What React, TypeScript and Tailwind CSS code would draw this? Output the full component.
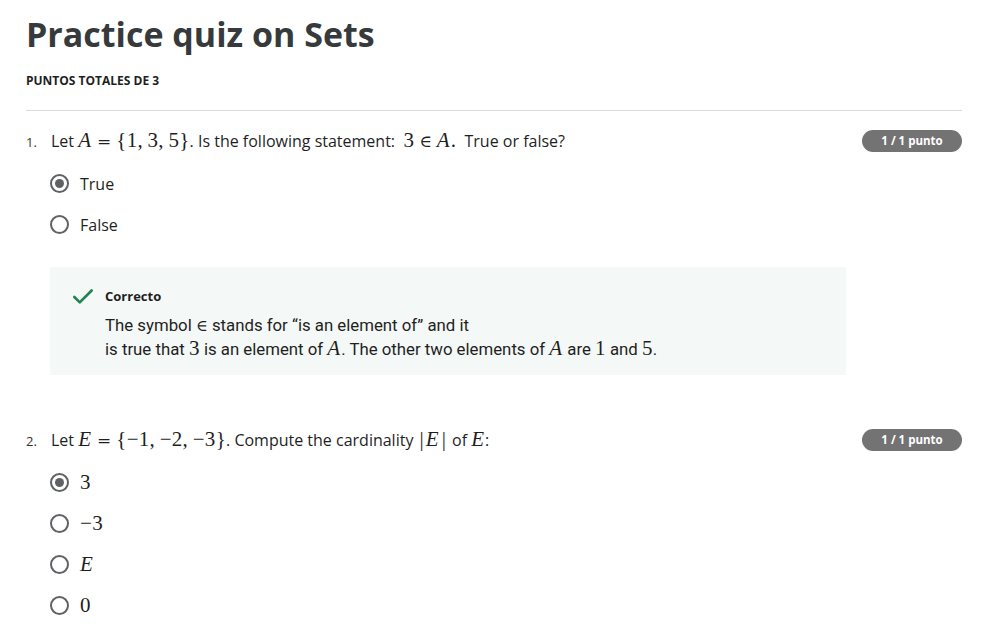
import { Check } from 'lucide-react';

const sans = { fontFamily: '"Open Sans", "Liberation Sans", sans-serif' };

function M({ children }: { children: React.ReactNode }) {
  return <span className="font-['Liberation_Serif',serif] text-[21px] leading-none tracking-[0.3px]">{children}</span>;
}

function V({ children }: { children: React.ReactNode }) {
  return <span className="font-['Liberation_Serif',serif] text-[21px] leading-none italic pr-[1px]">{children}</span>;
}

// relation symbol with KaTeX-like thick spacing
function R({ children }: { children: React.ReactNode }) {
  return <span className="font-['DejaVu_Serif',serif] text-[17px] leading-none mx-[5px]">{children}</span>;
}

// |x| delimiter bar
function Bar() {
  return <span className="font-['Liberation_Serif',serif] text-[21px] leading-none px-[2px]">|</span>;
}

function Radio({ checked, children }: { checked?: boolean; children: React.ReactNode }) {
  return (
    <div className="flex items-center h-[41px]">
      <span className="flex items-center justify-center size-[19px] rounded-full border-2 border-[#5f6164] bg-white shrink-0">
        {checked && <span className="size-[9px] rounded-full bg-[#5f6164]" />}
      </span>
      <span className="ml-[11px] text-[16px] text-[#1f1f1f]">{children}</span>
    </div>
  );
}

function Badge() {
  return (
    <span className="h-[22px] w-[100px] flex items-center justify-center rounded-full bg-[#737373] text-white text-[11.5px] font-bold shrink-0">
      1 / 1 punto
    </span>
  );
}

export default function App() {
  return (
    <div className="w-[988px] h-[642px] bg-white overflow-hidden px-[26px] text-[#1f1f1f]" style={sans}>
      <h1 className="pt-[11px] text-[34px] leading-[46px] font-bold text-[#373a3c]">Practice quiz on Sets</h1>
      <div className="mt-[16px] text-[12px] leading-[16px] font-bold text-[#1f1f1f]">PUNTOS TOTALES DE 3</div>
      <div className="mt-[21px] border-t border-[#dadada]" />

      {/* Question 1 */}
      <div className="mt-[19px] flex items-center justify-between h-[22px]">
        <div className="flex items-baseline text-[16px]">
          <span className="w-[25px] text-[13px] text-[#333]">1.</span>
          <span>
            Let <V>A</V><R>=</R><M>{'{'}1,&thinsp;3,&thinsp;5{'}'}</M>. Is the following statement:&nbsp; <M>3</M><R>∈</R><V>A</V><M>.</M>&nbsp; True or false?
          </span>
        </div>
        <Badge />
      </div>
      <div className="pl-[24px] mt-[11px]">
        <Radio checked>True</Radio>
        <Radio>False</Radio>
      </div>

      <div className="ml-[24px] mt-[22px] w-[796px] h-[108px] bg-[#f4f8f6] pl-[21px] pt-[17px]">
        <div className="flex items-center">
          <Check className="size-[26px] -ml-[1px] text-[#1f8354]" strokeWidth={2.4} />
          <span className="ml-[9px] text-[13px] font-bold text-[#1f1f1f]">Correcto</span>
        </div>
        <div className="pl-[34px] mt-[3px] text-[16.8px] leading-[24px] font-['Roboto',sans-serif] text-[#1f1f1f]">
          <div>The symbol <span className="font-['DejaVu_Serif',serif] text-[16px] leading-none">∈</span> stands for “is an element of” and it</div>
          <div>
            is true that <M>3</M> is an element of <V>A</V>. The other two elements of <V>A</V> are <M>1</M> and <M>5</M>.
          </div>
        </div>
      </div>

      {/* Question 2 */}
      <div className="mt-[54px] flex items-center justify-between h-[22px]">
        <div className="flex items-baseline text-[16px]">
          <span className="w-[25px] text-[13px] text-[#333]">2.</span>
          <span>
            Let <V>E</V><R>=</R><M>{'{'}−1,&thinsp;−2,&thinsp;−3{'}'}</M>. Compute the cardinality <Bar /><V>E</V><Bar /> of <V>E</V>:
          </span>
        </div>
        <Badge />
      </div>
      <div className="pl-[24px] mt-[11px]">
        <Radio checked><M>3</M></Radio>
        <Radio><M>−3</M></Radio>
        <Radio><V>E</V></Radio>
        <Radio><M>0</M></Radio>
      </div>
    </div>
  );
}
